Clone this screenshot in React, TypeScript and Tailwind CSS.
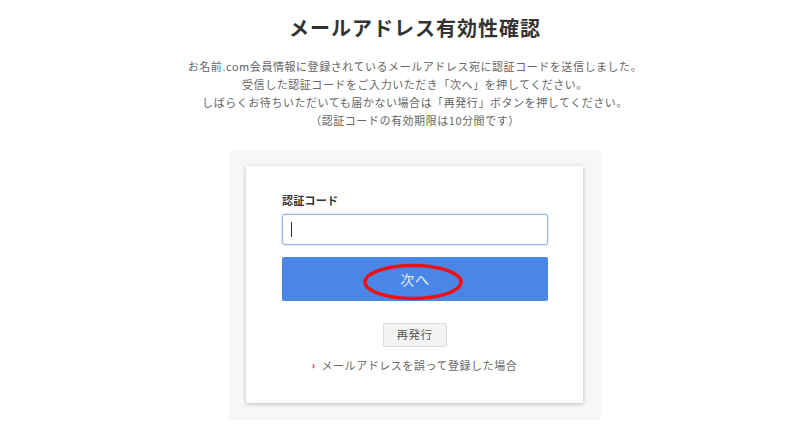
import React from "react";

const font = { fontFamily: '"Noto Sans CJK JP", "Noto Sans", sans-serif' };

const App: React.FC = () => {
  return (
    <div
      className="w-[799px] h-[427px] bg-white text-[#333] flex flex-col items-center overflow-hidden pl-[31px]"
      style={font}
    >
      <h1 className="mt-[13px] text-[20px] leading-[30px] font-bold tracking-[1px] text-[#333]">
        メールアドレス有効性確認
      </h1>

      <div className="mt-[14px] text-center text-[11px] leading-[18px] tracking-[0.05em] text-[#666]">
        <p>お名前.com会員情報に登録されているメールアドレス宛に認証コードを送信しました。</p>
        <p>受信した認証コードをご入力いただき「次へ」を押してください。</p>
        <p>しばらくお待ちいただいても届かない場合は「再発行」ボタンを押してください。</p>
        <p>（認証コードの有効期限は10分間です）</p>
      </div>

      <div className="mt-[21px] w-[372px] h-[270px] bg-[#f7f7f7] rounded-[4px] px-[17px] pt-[16px]">
        <div className="w-[337px] h-[237px] bg-white shadow-[0_1px_4px_rgba(0,0,0,0.25)] px-[36px] pt-[26px] flex flex-col">
          <label className="text-[11px] leading-[16px] font-bold tracking-[0.02em] text-[#333]">
            認証コード
          </label>
          <div className="mt-[6px] h-[31px] w-[266px] rounded-[3px] border border-[#8fb1e8] shadow-[0_0_2px_rgba(74,134,232,0.5)] flex items-center px-[8px]">
            <span className="block w-px h-[15px] bg-[#333]" />
          </div>
          <div className="relative mt-[12px] h-[44px] w-[266px] rounded-[2px] bg-[#4a86e8] flex items-center justify-center">
            <span className="text-[14px] text-[#e6eefc] tracking-[0.05em]">次へ</span>
            <svg
              className="absolute left-[80px] top-[6px]"
              width="102"
              height="38"
              viewBox="0 0 102 38"
            >
              <ellipse cx="51" cy="19" rx="48" ry="16.5" fill="none" stroke="#f01010" strokeWidth="3.5" />
            </svg>
          </div>
          <div className="mt-[22px] flex justify-center">
            <button className="h-[24px] w-[64px] bg-[#f3f3f3] border border-[#dcdcdc] rounded-[2px] text-[11.5px] text-[#555] tracking-[0.05em]">
              再発行
            </button>
          </div>
          <div className="mt-[10px] flex justify-center items-center text-[11px] leading-[16px] tracking-[0.05em] text-[#666]">
            <span className="text-[#c0143c] text-[10px] mr-[6px] font-bold">›</span>
            <span>メールアドレスを誤って登録した場合</span>
          </div>
        </div>
      </div>
    </div>
  );
};

export default App;
